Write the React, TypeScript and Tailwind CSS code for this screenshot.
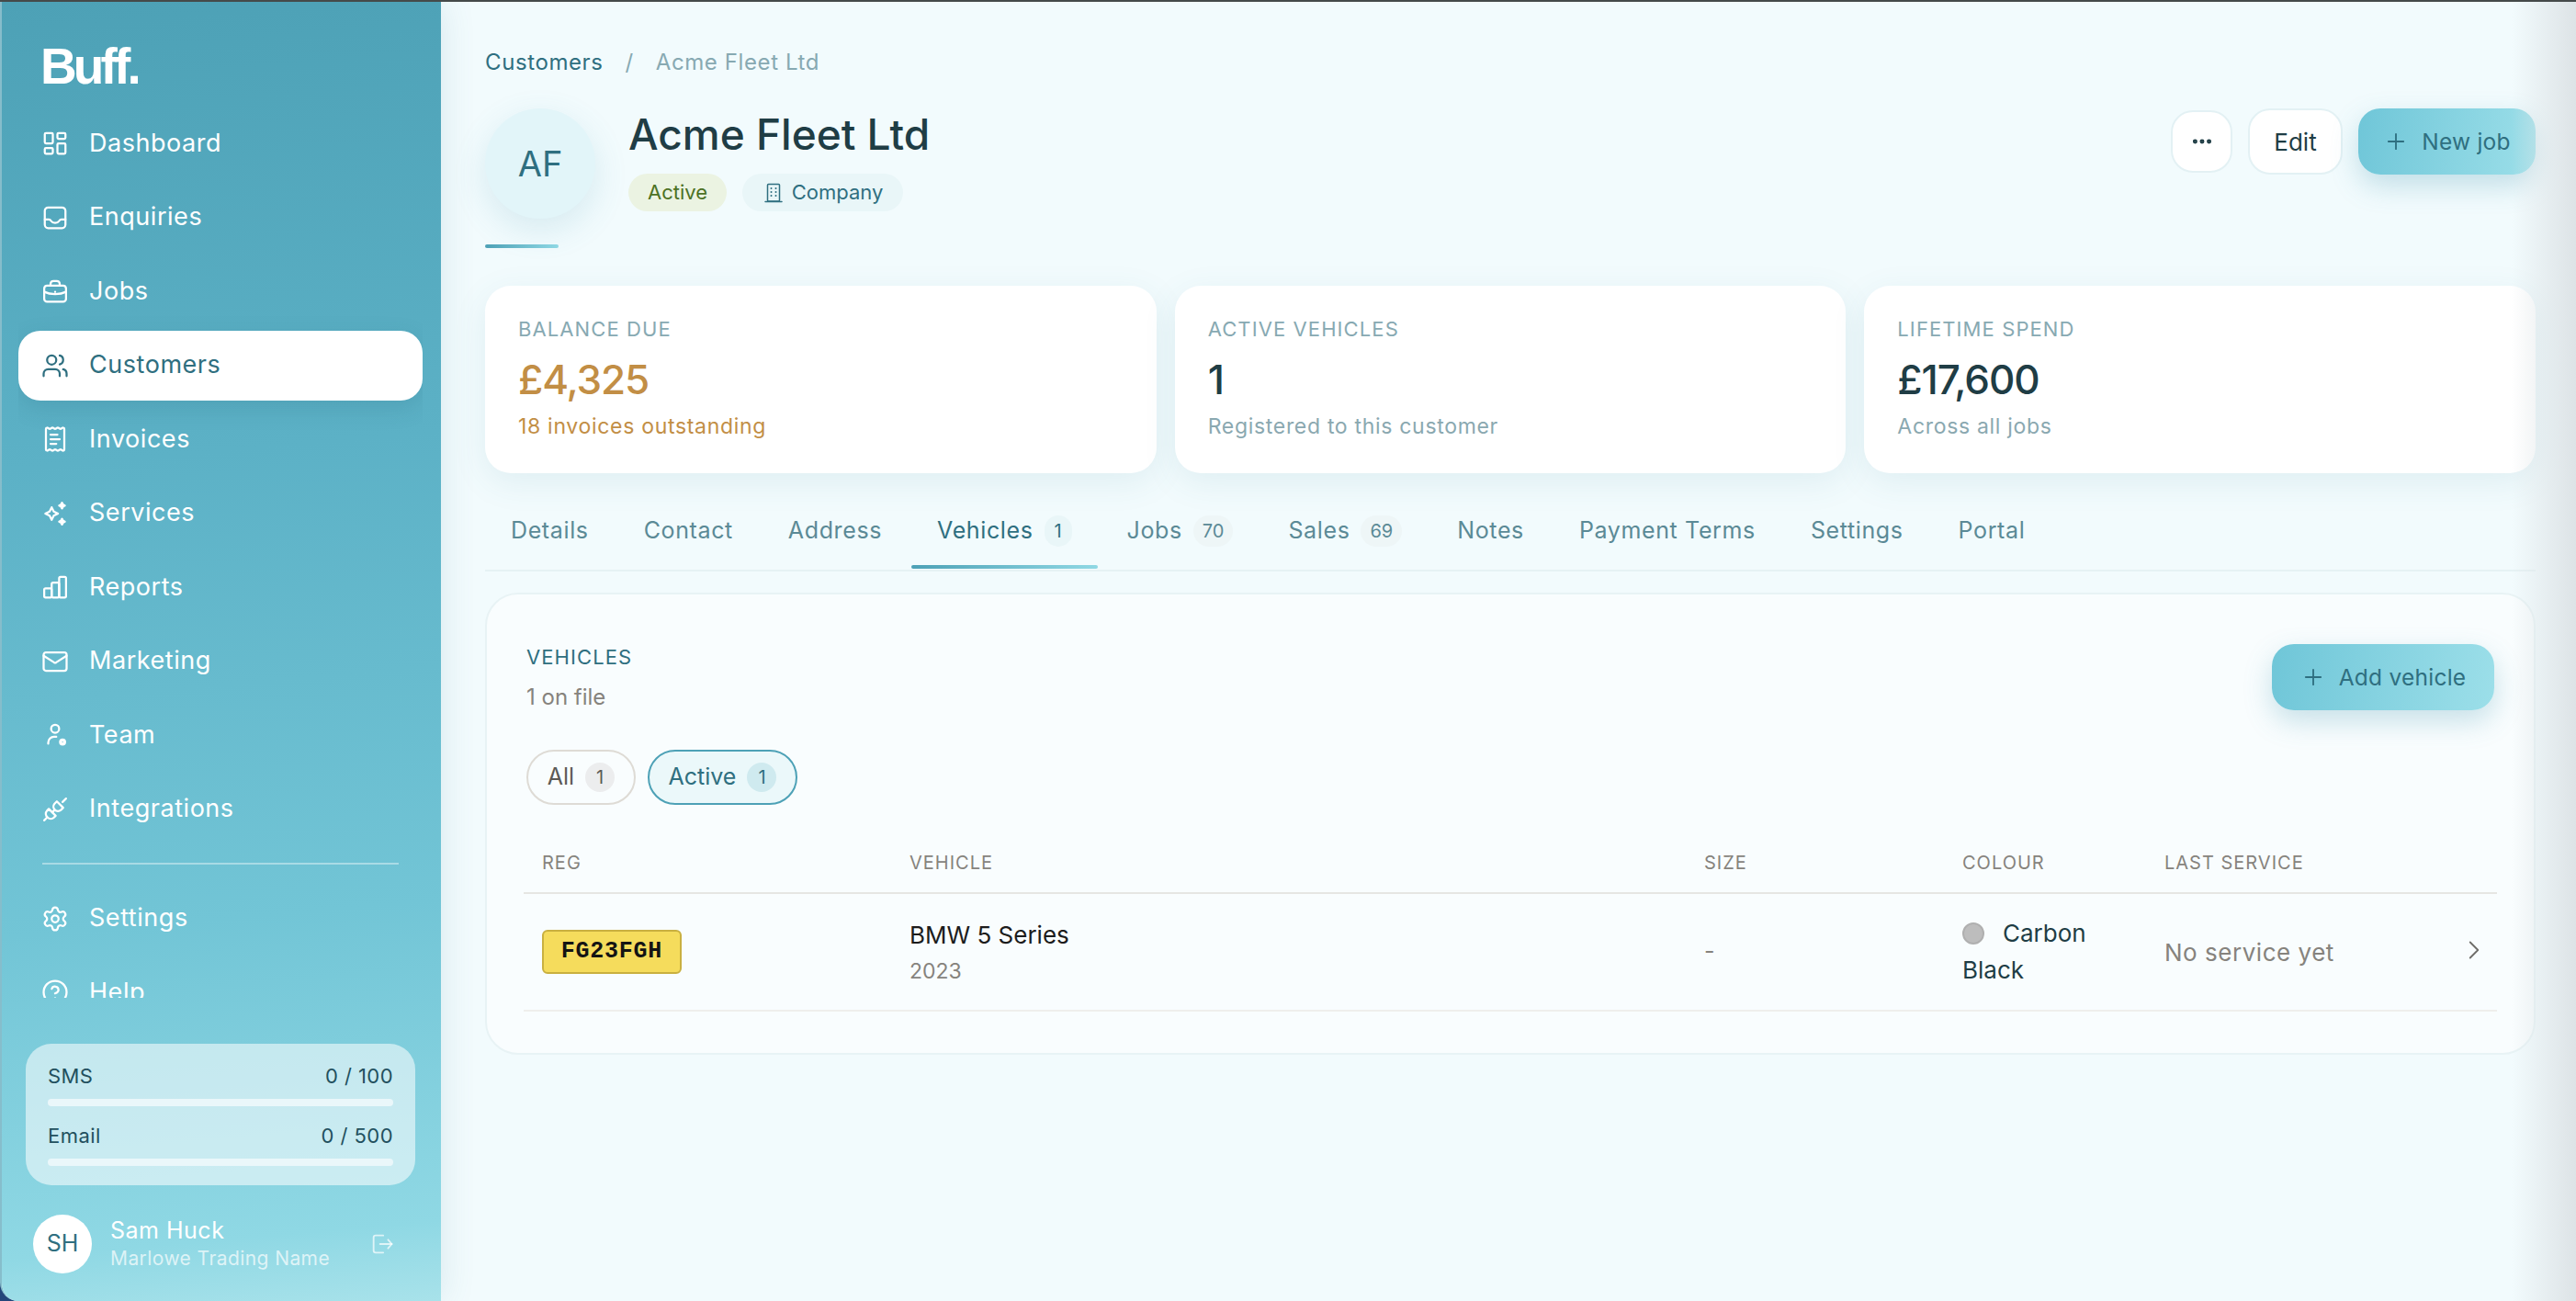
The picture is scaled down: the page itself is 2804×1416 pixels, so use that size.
import { ChevronRight, CircleHelp, LayoutDashboard, Mail, MoreHorizontal, Plus, ReceiptText, Settings, Users } from 'lucide-react';
import type { ReactNode } from 'react';

const font = { fontFamily: 'Inter, "Open Sans", sans-serif' };

const svgProps = {
  width: 30,
  height: 30,
  viewBox: '0 0 24 24',
  fill: 'none',
  stroke: 'currentColor',
  strokeWidth: 1.8,
  strokeLinecap: 'round' as const,
  strokeLinejoin: 'round' as const,
};

function TrayIcon() {
  return (
    <svg {...svgProps}>
      <rect x="3" y="3" width="18" height="18" rx="3" />
      <path d="M3 13.5h3.5c1 0 1.6.6 2.2 1.5.6 1 1.6 1.5 3.3 1.5s2.7-.5 3.3-1.5c.6-.9 1.2-1.5 2.2-1.5H21" />
    </svg>
  );
}

function BriefcaseIcon() {
  return (
    <svg {...svgProps}>
      <rect x="2.5" y="7" width="19" height="14" rx="2.5" />
      <path d="M8 7V5.5A2.5 2.5 0 0 1 10.5 3h3A2.5 2.5 0 0 1 16 5.5V7" />
      <path d="M2.5 12.5c3 1.5 6 2 9.5 2s6.5-.5 9.5-2" />
      <path d="M12 12.4v.2" />
    </svg>
  );
}

function SparkIcon() {
  return (
    <svg {...svgProps}>
      <path d="M9 6.5 10.8 10.2 14.5 12l-3.7 1.8L9 17.5l-1.8-3.7L3.5 12l3.7-1.8Z" />
      <path d="M18 2.5l.9 1.7 1.6.8-1.6.9-.9 1.6-.9-1.6-1.6-.9 1.6-.8Z" fill="currentColor" />
      <path d="M18 16.5l.9 1.7 1.6.8-1.6.9-.9 1.6-.9-1.6-1.6-.9 1.6-.8Z" fill="currentColor" />
    </svg>
  );
}

function BarsIcon() {
  return (
    <svg {...svgProps}>
      <rect x="2.5" y="13" width="6.5" height="8" rx="1.2" />
      <rect x="9" y="8" width="6.5" height="13" rx="1.2" />
      <rect x="15.5" y="3" width="6" height="18" rx="1.2" />
    </svg>
  );
}

function TeamIcon() {
  return (
    <svg {...svgProps}>
      <circle cx="12" cy="6.5" r="3.5" />
      <path d="M6 19.5v-1a5 5 0 0 1 5-5h2" />
      <circle cx="18.5" cy="18" r="1.8" strokeWidth={2.6} />
    </svg>
  );
}

function PlugIcon() {
  return (
    <svg {...svgProps}>
      <path d="M21.5 2.5 18.5 5.5" />
      <path d="M13.5 5 19 10.5l-2 2a3.9 3.9 0 0 1-5.5-5.5Z" />
      <path d="M6.5 11.5 12.5 17.5 11 19a3.9 3.9 0 0 1-5.5 0 4 4 0 0 1-.5-6Z" />
      <path d="M5 19 2.500 21.500" />
      <path d="M9.500 14.500 11.500 12.500" />
    </svg>
  );
}

function ExitIcon() {
  return (
    <svg {...svgProps} width={28} height={28} strokeWidth={1.6}>
      <path d="M13 4H6a2 2 0 0 0-2 2v12a2 2 0 0 0 2 2h7" />
      <path d="M10 12h11" />
      <path d="m17.5 8 3.5 4-3.500 4" />
    </svg>
  );
}

function OfficeIcon() {
  return (
    <svg {...svgProps} width={24} height={24} strokeWidth={1.5}>
      <rect x="5.5" y="2.500" width="13" height="18.500" rx="1" />
      <path d="M3 21.500h18" />
      <path d="M9.500 7v.1M14.500 7v.1M9.500 11v.1M14.500 11v.1M9.500 15v.1M14.500 15v.1" strokeWidth={2} />
    </svg>
  );
}

const navItems: { label: string; icon: ReactNode }[] = [
  { label: 'Dashboard', icon: <LayoutDashboard size={30} strokeWidth={1.8} /> },
  { label: 'Enquiries', icon: <TrayIcon /> },
  { label: 'Jobs', icon: <BriefcaseIcon /> },
  { label: 'Customers', icon: <Users size={30} strokeWidth={1.8} /> },
  { label: 'Invoices', icon: <ReceiptText size={30} strokeWidth={1.8} /> },
  { label: 'Services', icon: <SparkIcon /> },
  { label: 'Reports', icon: <BarsIcon /> },
  { label: 'Marketing', icon: <Mail size={30} strokeWidth={1.8} /> },
  { label: 'Team', icon: <TeamIcon /> },
  { label: 'Integrations', icon: <PlugIcon /> },
];

function NavRow({ label, icon, active }: { label: string; icon: ReactNode; active?: boolean }) {
  return (
    <div
      className={`flex h-[76px] shrink-0 items-center gap-[22px] rounded-[24px] pl-[25px] text-[27px] tracking-[0.02em] ${
        active ? 'bg-white text-[#2f6f80] shadow-[0_8px_24px_rgba(40,100,120,0.18)]' : 'text-white'
      }`}
    >
      <span className="flex shrink-0">{icon}</span>
      <span>{label}</span>
    </div>
  );
}

function Usage({ label, value }: { label: string; value: string }) {
  return (
    <div>
      <div className="flex h-[34px] items-center justify-between text-[22px] tracking-[0.02em] text-[#22505e]">
        <span>{label}</span>
        <span>{value}</span>
      </div>
      <div className="mt-[8px] h-[8px] rounded-full bg-[#eaf7fa]" />
    </div>
  );
}

function Sidebar() {
  return (
    <aside className="relative z-10 flex h-full w-[478px] shrink-0 flex-col bg-[linear-gradient(175deg,#4da1b6_0%,#5cb1c6_35%,#72c5d6_70%,#8fd8e4_94%,#a8e2ea_100%)] shadow-[0_0_36px_rgba(60,120,140,0.14)]">
      <div className="pl-[42px] pt-[40px]">
        <div className="text-[55px] font-bold leading-[60px] tracking-[-0.07em] text-white" style={{ fontFamily: '"Liberation Sans", sans-serif' }}>
          Buff.
        </div>
      </div>
      <nav className="ml-[18px] mr-[20px] mt-[16px] flex h-[968px] flex-col gap-[4.5px] overflow-hidden">
        {navItems.map((item) => (
          <NavRow key={item.label} label={item.label} icon={item.icon} active={item.label === 'Customers'} />
        ))}
        <div className="mx-[26px] my-[16px] h-[2px] shrink-0 bg-white/40" />
        <NavRow label="Settings" icon={<Settings size={30} strokeWidth={1.8} />} />
        <NavRow label="Help" icon={<CircleHelp size={30} strokeWidth={1.8} />} />
      </nav>
      <div className="ml-[26px] mr-[28px] mt-[50px] flex h-[154px] flex-col gap-[15px] rounded-[28px] bg-white/55 px-[24px] pt-[18px]">
        <Usage label="SMS" value="0 / 100" />
        <Usage label="Email" value="0 / 500" />
      </div>
      <div className="mt-[32px] flex items-center pl-[34px] pr-[50px]">
        <div className="flex h-[64px] w-[64px] items-center justify-center rounded-full bg-white text-[25px] text-[#2f6f80]">SH</div>
        <div className="ml-[20px] flex-1">
          <div className="text-[25px] leading-[32px] tracking-[0.02em] text-white">Sam Huck</div>
          <div className="whitespace-nowrap text-[21px] leading-[30px] tracking-[0.02em] text-white/70">Marlowe Trading Name</div>
        </div>
        <span className="text-white/70">
          <ExitIcon />
        </span>
      </div>
    </aside>
  );
}

function Stat({ label, value, sub, gold }: { label: string; value: string; sub: string; gold?: boolean }) {
  return (
    <div className="flex h-[204px] flex-col rounded-[28px] bg-white px-[36px] pt-[33px] shadow-[0_10px_36px_rgba(60,130,150,0.1)]">
      <div className="text-[22px] leading-[28px] tracking-[0.05em] text-[#87a9b2]">{label}</div>
      <div className={`mt-[11px] text-[44px] font-medium leading-[60px] tracking-[-0.025em] ${gold ? 'text-[#c28e45]' : 'text-[#1f3d45]'}`}>{value}</div>
      <div className={`mt-[5px] text-[23px] leading-[32px] tracking-[0.03em] ${gold ? 'text-[#c28e45]' : 'text-[#8aa8b0]'}`}>{sub}</div>
    </div>
  );
}

function Tab({ label, count, active }: { label: string; count?: string; active?: boolean }) {
  return (
    <div className="relative flex h-[86px] items-center gap-[12px] px-[28px]">
      <span className={`text-[25px] tracking-[0.025em] ${active ? 'text-[#2f6f80]' : 'text-[#5b8a96]'}`}>{label}</span>
      {count && (
        <span className={`flex h-[34px] min-w-[30px] items-center justify-center rounded-full px-[10px] text-[20px] ${active ? 'bg-[#e9f6f8] text-[#2f6f80]' : 'bg-[#eef6f7] text-[#5b8a96]'}`}>
          {count}
        </span>
      )}
      {active && <div className="absolute bottom-[2px] left-0 right-0 h-[4px] rounded-full bg-[linear-gradient(90deg,#4da1b6,#8fd8e4)]" />}
    </div>
  );
}

function PrimaryButton({ label, className }: { label: string; className: string }) {
  return (
    <div
      className={`flex h-[72px] items-center justify-center gap-[14px] rounded-[24px] bg-[linear-gradient(100deg,#6fc6d8,#9cdfe9)] text-[24.5px] tracking-[0.01em] text-[#2f6f80] shadow-[0_12px_30px_rgba(70,150,175,0.28)] ${className}`}
    >
      <Plus size={28} strokeWidth={1.6} />
      <span>{label}</span>
    </div>
  );
}

function Filter({ label, active, className }: { label: string; active?: boolean; className: string }) {
  return (
    <div
      className={`flex h-[60px] items-center justify-center gap-[12px] rounded-full border-2 text-[25px] ${
        active ? 'border-[#4da1b6] bg-[#ebf8fa] text-[#2f6f80]' : 'border-[#dedbd5] text-[#5c5a56]'
      } ${className}`}
    >
      <span>{label}</span>
      <span className={`flex h-[32px] w-[32px] items-center justify-center rounded-full text-[20px] ${active ? 'bg-[#cfeaef]' : 'bg-[#ecedee]'}`}>1</span>
    </div>
  );
}

const columns = 'grid grid-cols-[400px_865px_281px_220px_1fr_46px]';

export default function App() {
  return (
    <div className="h-screen w-full overflow-hidden border-t-2 border-[#454a4a] bg-[#24457a]" style={font}>
      <div className="relative flex h-full overflow-hidden rounded-bl-[20px] border-l-2 border-[#86bdcb] bg-[#f2fbfd]">
        <Sidebar />
        <main className="min-w-0 flex-1 pl-[48px] pr-[44px] pt-[50px]">
          <div className="flex h-[32px] items-center text-[24px] tracking-[0.025em]">
            <span className="text-[#2f6f80]">Customers</span>
            <span className="mx-[24px] text-[#87a9b2]">/</span>
            <span className="text-[#87a9b2]">Acme Fleet Ltd</span>
          </div>

          <div className="mt-[34px] flex h-[152px] items-start justify-between">
            <div className="relative flex">
              <div className="flex h-[120px] w-[120px] items-center justify-center rounded-full bg-[#e2f5f9] text-[38px] text-[#2f6f80] shadow-[0_12px_36px_rgba(70,150,175,0.16)]">AF</div>
              <div className="absolute left-0 top-[148px] h-[4px] w-[80px] rounded-full bg-[linear-gradient(90deg,#4da1b6,#8fd8e4)]" />
              <div className="ml-[36px]">
                <div className="text-[46px] font-medium leading-[56px] text-[#1f3d45]">Acme Fleet Ltd</div>
                <div className="mt-[15px] flex gap-[17px]">
                  <span className="flex h-[41px] w-[107px] items-center justify-center rounded-full bg-[#ebf3e2] text-[22px] text-[#4c7124]">Active</span>
                  <span className="flex h-[41px] w-[175px] items-center justify-center gap-[8px] rounded-full bg-[#e9f6f8] text-[22px] text-[#2f6f80]">
                    <OfficeIcon />
                    Company
                  </span>
                </div>
              </div>
            </div>
            <div className="flex items-center gap-[17px]">
              <div className="flex h-[68px] w-[67px] items-center justify-center rounded-[24px] border-2 border-[#e3f1f4] bg-white text-[#1f3d45]">
                <MoreHorizontal size={26} strokeWidth={2.6} />
              </div>
              <div className="flex h-[72px] w-[103px] items-center justify-center rounded-[24px] border-2 border-[#e3f1f4] bg-white text-[26px] text-[#1f3d45]">Edit</div>
              <PrimaryButton label="New job" className="w-[193px]" />
            </div>
          </div>

          <div className="mt-[41px] grid grid-cols-3 gap-[20px]">
            <Stat label="BALANCE DUE" value="£4,325" sub="18 invoices outstanding" gold />
            <Stat label="ACTIVE VEHICLES" value="1" sub="Registered to this customer" />
            <Stat label="LIFETIME SPEND" value="£17,600" sub="Across all jobs" />
          </div>

          <div className="mt-[20px] flex h-[87px] gap-[4px] border-b-2 border-[#e6f2f4]">
            <Tab label="Details" />
            <Tab label="Contact" />
            <Tab label="Address" />
            <Tab label="Vehicles" count="1" active />
            <Tab label="Jobs" count="70" />
            <Tab label="Sales" count="69" />
            <Tab label="Notes" />
            <Tab label="Payment Terms" />
            <Tab label="Settings" />
            <Tab label="Portal" />
          </div>

          <section className="mt-[23px] h-[503px] rounded-[36px] border-2 border-[#e8f3f5] bg-[#f9fdfe] px-[40px] pt-[54px]">
            <div className="flex items-start justify-between pl-[3px] pr-[3px]">
              <div>
                <div className="text-[22px] leading-[28px] tracking-[0.05em] text-[#2f6f80]">VEHICLES</div>
                <div className="mt-[14px] text-[24px] leading-[32px] text-[#86837d]">1 on file</div>
              </div>
              <PrimaryButton label="Add vehicle" className="w-[242px]" />
            </div>
            <div className="mt-[41px] flex gap-[13px] pl-[3px]">
              <Filter label="All" className="w-[119px]" />
              <Filter label="Active" active className="w-[163px]" />
            </div>
            <div className={`${columns} mt-[50px] h-[47px] items-start border-b-2 border-[#e6e6e3] pl-[20px] text-[20px] leading-[26px] tracking-[0.05em] text-[#86837d]`}>
              <span>REG</span>
              <span>VEHICLE</span>
              <span>SIZE</span>
              <span>COLOUR</span>
              <span>LAST SERVICE</span>
            </div>
            <div className={`${columns} h-[128px] items-center border-b-2 border-[#efefec] pl-[20px]`}>
              <div>
                <span className="inline-flex h-[48px] w-[152px] items-center justify-center rounded-[6px] border-2 border-[#c9b040] bg-[#f5dc5c] text-[25px] font-bold tracking-[0.03em] text-[#141414]" style={{ fontFamily: '"Liberation Mono", monospace' }}>
                  FG23FGH
                </span>
              </div>
              <div>
                <div className="text-[26px] leading-[38px] text-[#1c1c1c]">BMW 5 Series</div>
                <div className="mt-[4px] text-[23px] leading-[32px] text-[#86837d]">2023</div>
              </div>
              <div className="text-[25px] text-[#86837d]">-</div>
              <div className="pr-[30px] text-[26px] leading-[40px] text-[#1f3d45]">
                <span className="mr-[20px] inline-block h-[24px] w-[24px] rounded-full border-2 border-[#b0b0b0] bg-[#bdbdbd] align-[-3px]" />
                Carbon Black
              </div>
              <div className="text-[26px] tracking-[0.02em] text-[#86837d]">No service yet</div>
              <ChevronRight size={34} strokeWidth={1.3} className="-mt-[4px] ml-[4px] text-[#6e6d69]" />
            </div>
          </section>
        </main>
        <div className="pointer-events-none absolute inset-y-0 right-0 z-20 w-[70px] bg-[linear-gradient(90deg,rgba(222,228,231,0),#dde3e6)]" />
      </div>
    </div>
  );
}
